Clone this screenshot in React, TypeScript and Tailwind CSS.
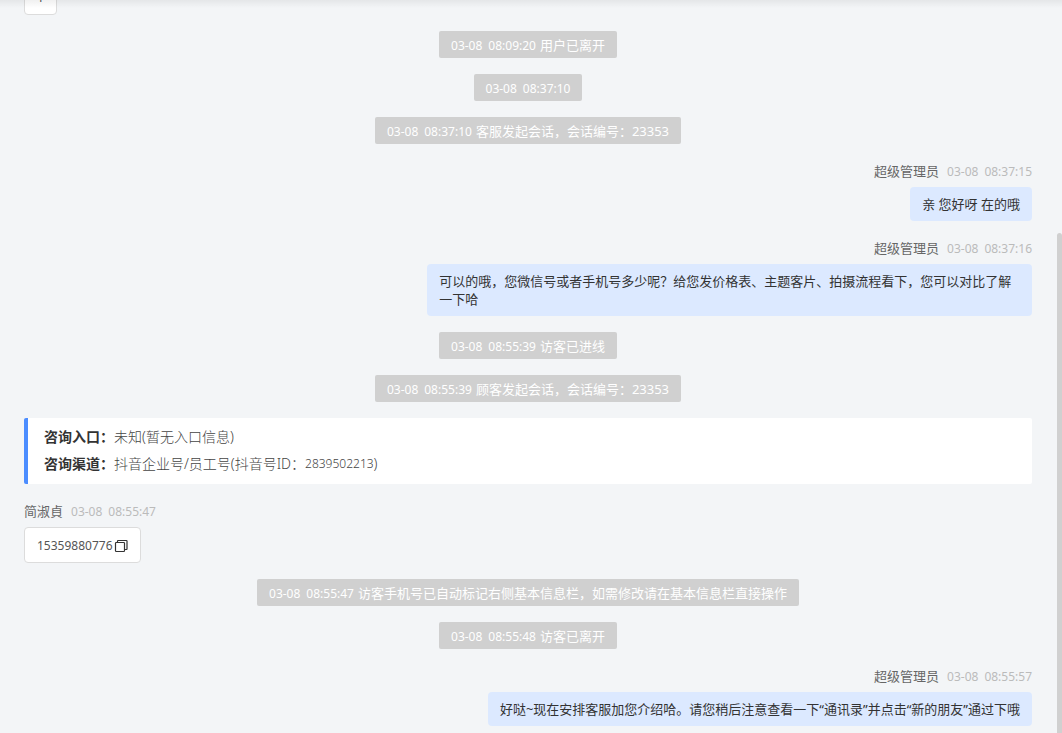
import React from "react";

type Item =
  | { kind: "notice"; time: string; text?: string }
  | { kind: "agent"; name: string; time: string; text: string }
  | { kind: "visitor"; name?: string; time?: string; text: string; copyable?: boolean }
  | { kind: "source"; rows: { label: string; value: string; id?: string; tail?: string }[] };

const items: Item[] = [
  { kind: "visitor", text: "1" },
  { kind: "notice", time: "03-08 08:09:20", text: "用户已离开" },
  { kind: "notice", time: "03-08 08:37:10" },
  { kind: "notice", time: "03-08 08:37:10", text: "客服发起会话，会话编号：23353" },
  { kind: "agent", name: "超级管理员", time: "03-08 08:37:15", text: "亲 您好呀 在的哦" },
  {
    kind: "agent",
    name: "超级管理员",
    time: "03-08 08:37:16",
    text: "可以的哦，您微信号或者手机号多少呢？给您发价格表、主题客片、拍摄流程看下，您可以对比了解一下哈",
  },
  { kind: "notice", time: "03-08 08:55:39", text: "访客已进线" },
  { kind: "notice", time: "03-08 08:55:39", text: "顾客发起会话，会话编号：23353" },
  {
    kind: "source",
    rows: [
      { label: "咨询入口：", value: "未知(暂无入口信息)" },
      { label: "咨询渠道：", value: "抖音企业号/员工号(抖音号ID：", id: "2839502213", tail: ")" },
    ],
  },
  { kind: "visitor", name: "简淑貞", time: "03-08 08:55:47", text: "15359880776", copyable: true },
  {
    kind: "notice",
    time: "03-08 08:55:47",
    text: "访客手机号已自动标记右侧基本信息栏，如需修改请在基本信息栏直接操作",
  },
  { kind: "notice", time: "03-08 08:55:48", text: "访客已离开" },
  {
    kind: "agent",
    name: "超级管理员",
    time: "03-08 08:55:57",
    text: "好哒~现在安排客服加您介绍哈。请您稍后注意查看一下“通讯录”并点击“新的朋友”通过下哦",
  },
];

function Time({ value }: { value: string }) {
  const [date, clock] = value.split(" ");
  return (
    <time className="inline-flex gap-1.5 text-xs leading-[19px]">
      <span>{date}</span>
      <span>{clock}</span>
    </time>
  );
}

function CopyIcon() {
  return (
    <svg width="14" height="14" viewBox="0 0 14 14" fill="none" stroke="#333" strokeWidth="1.2">
      <rect x="1.5" y="3.5" width="9" height="9" rx="0.8" />
      <path d="M3.5 3.3V2.1a.6.6 0 0 1 .6-.6h8.3a.6.6 0 0 1 .6.6v7.8a.6.6 0 0 1-.6.6H10.6" />
    </svg>
  );
}

function Meta({ name, time }: { name: string; time: string }) {
  return (
    <div className="flex items-center gap-2 leading-[22px] text-[#666]">
      {name}
      <span className="flex text-[#bbb]">
        <Time value={time} />
      </span>
    </div>
  );
}

function Notice({ time, text }: { time: string; text?: string }) {
  return (
    <div className="flex shrink-0 justify-center">
      <p className="flex items-center gap-1 rounded-xs bg-[#d0d0d0] px-3 pt-[5px] pb-[3px] leading-[19px] text-white">
        <Time value={time} />
        {text && <span>{text}</span>}
      </p>
    </div>
  );
}

function AgentMessage({ name, time, text }: { name: string; time: string; text: string }) {
  return (
    <div className="flex shrink-0 flex-col items-end gap-[5px]">
      <Meta name={name} time={time} />
      <p className="max-w-[60%] rounded-sm bg-[#dce9ff] px-3 py-2 leading-[18px] text-[#333]">{text}</p>
    </div>
  );
}

function VisitorMessage({ name, time, text, copyable }: { name?: string; time?: string; text: string; copyable?: boolean }) {
  return (
    <div className="flex shrink-0 flex-col items-start gap-[5px]">
      {name && time && <Meta name={name} time={time} />}
      <div className="flex items-center rounded-sm border border-[#dcdcdc] bg-white px-3 pt-[9px] pb-[7px] text-xs leading-[18px] text-[#555]">
        {text}
        {copyable && (
          <button type="button" aria-label="复制" className="pl-px">
            <CopyIcon />
          </button>
        )}
      </div>
    </div>
  );
}

export default function App() {
  return (
    <div className="relative flex h-screen overflow-hidden bg-[#f3f5f7] text-[13px] font-['Noto_Sans','Noto_Sans_CJK_SC',sans-serif]">
      <main className="flex min-w-0 flex-1 flex-col justify-end gap-4 overflow-hidden pr-[25px] pb-[7px] pl-6">
        {items.map((item, i) => {
          switch (item.kind) {
            case "notice":
              return <Notice key={i} {...item} />;
            case "agent":
              return <AgentMessage key={i} {...item} />;
            case "visitor":
              return <VisitorMessage key={i} {...item} />;
            case "source":
              return (
                <dl key={i} className="shrink-0 rounded-xs border-l-4 border-[#4c8dff] bg-white px-4 pt-[5px] pb-[7px] text-sm">
                  {item.rows.map((row) => (
                    <div key={row.label} className="flex leading-[27px]">
                      <dt className="font-bold text-[#333]">{row.label}</dt>
                      <dd className="flex font-light text-[#444]">
                        {row.value}
                        {row.id && <span className="text-xs leading-[27px]">{row.id}</span>}
                        {row.tail}
                      </dd>
                    </div>
                  ))}
                </dl>
              );
          }
        })}
      </main>

      {/* Scrollbar thumb */}
      <div className="mt-auto h-[500px] w-[5px] shrink-0 rounded-t-sm bg-[#d0d0d0]" />

      {/* Shadow cast by the chat header */}
      <div className="pointer-events-none absolute inset-x-0 top-0 h-2 bg-linear-to-b from-black/6 to-transparent" />
    </div>
  );
}
